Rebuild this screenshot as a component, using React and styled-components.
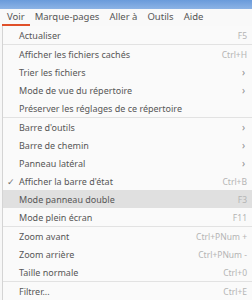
import styled, { createGlobalStyle } from "styled-components";

const Global = createGlobalStyle`
  html, body {
    margin: 0;
    padding: 0;
    background: #f7f7f7;
  }
  body {
    font-family: "Noto Sans", "Open Sans", sans-serif;
    font-size: 9.5px;
    color: #4a4a4a;
  }
`;

const Window = styled.div`
  width: 252px;
  height: 300px;
  overflow: hidden;
  display: flex;
  flex-direction: column;
  background: #f7f7f7;
`;

const TitleBar = styled.div`
  height: 10px;
  background: linear-gradient(#6a9bdb, #8cb3e5);
`;

const MenuBar = styled.div`
  height: 18px;
  display: flex;
  align-items: stretch;
  padding-left: 2px;
  background: #f9f9f9;
`;

const MenuTitle = styled.div`
  padding: 0 5px;
  display: flex;
  align-items: center;
  color: #555;
  border-bottom: 2px solid ${(p) => (p.$open ? "#e0502a" : "transparent")};
`;

const Dropdown = styled.div`
  flex: 1;
  margin-left: 2px;
  border-left: 1px solid #d4d4d4;
  background: #fafafa;
  display: flex;
  flex-direction: column;
`;

const Item = styled.div`
  height: 18px;
  flex-shrink: 0;
  display: grid;
  grid-template-columns: 16px 1fr auto;
  align-items: center;
  padding-right: 5px;
  font-size: 9px;
  background: ${(p) => (p.$active ? "#e0e0e0" : "transparent")};
`;

const Check = styled.span`
  font-size: 9px;
  color: #707070;
  padding-left: 4px;
`;

const Label = styled.span`
  color: #575757;
  white-space: nowrap;
`;

const Hint = styled.span`
  color: #b4b4b4;
  font-size: 8.5px;
  white-space: nowrap;
`;

const Chevron = styled.span`
  color: #8e8e8e;
  font-size: 10px;
  padding-right: 2px;
`;

const Separator = styled.div`
  height: 1px;
  flex-shrink: 0;
  background: #e2e2e2;
`;

const menus = ["Voir", "Marque-pages", "Aller à", "Outils", "Aide"];

const entries = [
  { label: "Actualiser", hint: "F5" },
  "sep",
  { label: "Afficher les fichiers cachés", hint: "Ctrl+H" },
  { label: "Trier les fichiers", sub: true },
  { label: "Mode de vue du répertoire", sub: true },
  { label: "Préserver les réglages de ce répertoire" },
  "sep",
  { label: "Barre d'outils", sub: true },
  { label: "Barre de chemin", sub: true },
  { label: "Panneau latéral", sub: true },
  { label: "Afficher la barre d'état", hint: "Ctrl+B", checked: true },
  { label: "Mode panneau double", hint: "F3", active: true },
  { label: "Mode plein écran", hint: "F11" },
  "sep",
  { label: "Zoom avant", hint: "Ctrl+PNum +" },
  { label: "Zoom arrière", hint: "Ctrl+PNum -" },
  { label: "Taille normale", hint: "Ctrl+0" },
  "sep",
  { label: "Filtrer...", hint: "Ctrl+E" },
];

export default function App() {
  return (
    <Window>
      <Global />
      <TitleBar />
      <MenuBar>
        {menus.map((m, i) => (
          <MenuTitle key={m} $open={i === 0}>
            {m}
          </MenuTitle>
        ))}
      </MenuBar>
      <Dropdown>
        {entries.map((e, i) =>
          e === "sep" ? (
            <Separator key={i} />
          ) : (
            <Item key={i} $active={e.active}>
              <Check>{e.checked ? "✓" : ""}</Check>
              <Label>{e.label}</Label>
              {e.sub ? <Chevron>›</Chevron> : <Hint>{e.hint}</Hint>}
            </Item>
          )
        )}
      </Dropdown>
    </Window>
  );
}
